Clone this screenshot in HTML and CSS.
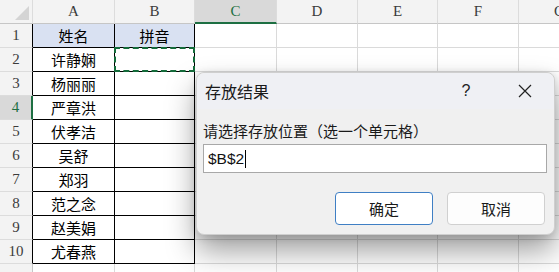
FILE: index.html
```html
<!DOCTYPE html>
<html lang="zh">
<head>
<meta charset="utf-8">
<title>存放结果</title>
<link rel="stylesheet" href="styles.css">
</head>
<body>
<div class="sheet">
  <div class="row head">
    <div class="corner"><svg width="14" height="14" viewBox="0 0 14 14"><polygon points="14,0 14,14 0,14" fill="#d4d4d4"/></svg></div>
    <div class="ch">A</div><div class="ch">B</div><div class="ch active">C</div><div class="ch">D</div><div class="ch">E</div><div class="ch">F</div><div class="ch">G</div>
  </div>
  <div class="row"><div class="rh t">1</div><div class="c a t hd">姓名</div><div class="c b t hd">拼音</div><div class="c"></div><div class="c"></div><div class="c"></div><div class="c"></div><div class="c"></div></div>
  <div class="row"><div class="rh t">2</div><div class="c a t">许静娴</div><div class="c b t copy"></div><div class="c"></div><div class="c"></div><div class="c"></div><div class="c"></div><div class="c"></div></div>
  <div class="row"><div class="rh t">3</div><div class="c a t">杨丽丽</div><div class="c b t"></div><div class="c"></div><div class="c"></div><div class="c"></div><div class="c"></div><div class="c"></div></div>
  <div class="row"><div class="rh t sel">4</div><div class="c a t">严章洪</div><div class="c b t"></div><div class="c"></div><div class="c"></div><div class="c"></div><div class="c"></div><div class="c"></div></div>
  <div class="row"><div class="rh t">5</div><div class="c a t">伏孝洁</div><div class="c b t"></div><div class="c"></div><div class="c"></div><div class="c"></div><div class="c"></div><div class="c"></div></div>
  <div class="row"><div class="rh t">6</div><div class="c a t">吴舒</div><div class="c b t"></div><div class="c"></div><div class="c"></div><div class="c"></div><div class="c"></div><div class="c"></div></div>
  <div class="row"><div class="rh t">7</div><div class="c a t">郑羽</div><div class="c b t"></div><div class="c"></div><div class="c"></div><div class="c"></div><div class="c"></div><div class="c"></div></div>
  <div class="row"><div class="rh t">8</div><div class="c a t">范之念</div><div class="c b t"></div><div class="c"></div><div class="c"></div><div class="c"></div><div class="c"></div><div class="c"></div></div>
  <div class="row"><div class="rh t">9</div><div class="c a t">赵美娟</div><div class="c b t"></div><div class="c"></div><div class="c"></div><div class="c"></div><div class="c"></div><div class="c"></div></div>
  <div class="row"><div class="rh t">10</div><div class="c a t">尤春燕</div><div class="c b t"></div><div class="c"></div><div class="c"></div><div class="c"></div><div class="c"></div><div class="c"></div></div>
  <div class="row"><div class="rh"></div><div class="c"></div><div class="c"></div><div class="c"></div><div class="c"></div><div class="c"></div><div class="c"></div><div class="c"></div></div>
</div>

<div class="dialog">
  <div class="titlebar">
    <div class="title">存放结果</div>
    <div class="help">?</div>
    <div class="close"><svg width="14" height="14" viewBox="0 0 14 14"><path d="M1 1 L13 13 M13 1 L1 13" stroke="#222" stroke-width="1.2" fill="none"/></svg></div>
  </div>
  <div class="body">
    <div class="label">请选择存放位置（选一个单元格）</div>
    <div class="input"><span class="val">$B$2</span><span class="caret"></span></div>
    <div class="buttons">
      <div class="btn primary">确定</div>
      <div class="btn">取消</div>
    </div>
  </div>
</div>
</body>
</html>
```

FILE: styles.css
```css
* { box-sizing: border-box; }
html, body { margin: 0; padding: 0; background: #fff; overflow: hidden; }
body {
  width: 559px; height: 272px; position: relative;
  font-family: "Noto Sans CJK SC", "Noto Sans", sans-serif;
  color: #000;
}
.sheet { display: flex; flex-direction: column; width: 601px; }
.row {
  display: grid;
  grid-template-columns: 33px 82px 80px 82px 81px 80px 81px 82px;
  height: 24px; flex: none;
}
.row > div {
  border-right: 1px solid #dadada;
  border-bottom: 1px solid #dadada;
  display: flex; align-items: center; justify-content: center;
}
.head > div {
  background: #f3f3f3;
  border-bottom: 1px solid #c6c6c6;
  border-right: 1px solid #dcdcdc;
  font-family: "Liberation Serif", "DejaVu Serif", serif;
  font-size: 15px; color: #3b3b3b;
}
.head .corner { justify-content: flex-end; align-items: flex-end; padding: 0 3px 3px 0; }
.head .active {
  background: #d9d9d9; color: #1d6f42;
  border-bottom: 2px solid #1d6f42;
}
.rh {
  background: #f3f3f3;
  font-family: "Liberation Serif", "DejaVu Serif", serif;
  font-size: 15px; color: #3b3b3b;
  border-bottom-color: #dcdcdc !important;
  border-right-color: #c6c6c6 !important;
}
.rh.t { border-right-color: #000 !important; }
.rh.sel {
  background: #d9d9d9; color: #1d6f42;
  border-right: 2px solid #1d6f42 !important;
}
.c { font-size: 15px; line-height: 1; }
.c.t { border-bottom-color: #000; border-right-color: #000; }
.c.hd { background: #d9e1f2; }
.copy { position: relative; }
.copy::after {
  content: ""; position: absolute; left: -1px; top: -1px; right: -1px; bottom: -1px;
  border: 2px dashed #146b3a;
}

.dialog {
  position: absolute; left: 196px; top: 72px; width: 359px; height: 163px;
  background: #f0f0f0;
  border: 1px solid #cfcfcf;
  border-radius: 8px;
  box-shadow: 0 16px 30px rgba(0,0,0,0.38), 0 2px 10px rgba(0,0,0,0.14);
  display: flex; flex-direction: column;
}
.titlebar {
  height: 36px; display: flex; align-items: center;
  padding: 0 9px 0 8px;
  background: #eff0f4; border-radius: 8px 8px 0 0;
}
.title { flex: 1; font-size: 16px; color: #1a1a1a; }
.help {
  width: 40px; text-align: center; margin-right: 19px;
  font-family: "Liberation Sans", sans-serif; font-size: 16px; color: #222;
}
.close { width: 40px; display: flex; justify-content: center; align-items: center; }
.body { padding: 12px 8px 0 6px; display: flex; flex-direction: column; }
.label { font-size: 15px; line-height: 20px; color: #1a1a1a; }
.input {
  margin-top: 3px; height: 29px; width: 344px;
  background: #fff; border: 1px solid #a8a8a8;
  display: flex; align-items: center; padding-left: 4px;
  font-family: "Liberation Sans", sans-serif; font-size: 15.5px; color: #111;
}
.caret { width: 1px; height: 18px; background: #000; margin-left: 1px; }
.buttons { display: flex; justify-content: flex-end; gap: 14px; margin-top: 19px; padding-right: 1px; }
.btn {
  width: 98px; height: 33px; border-radius: 4px;
  background: #fdfdfd; border: 1px solid #d0d0d0;
  display: flex; align-items: center; justify-content: center;
  font-size: 15px; color: #1a1a1a;
}
.btn.primary { border: 1px solid #3f7fc4; background: #fff; }
```
